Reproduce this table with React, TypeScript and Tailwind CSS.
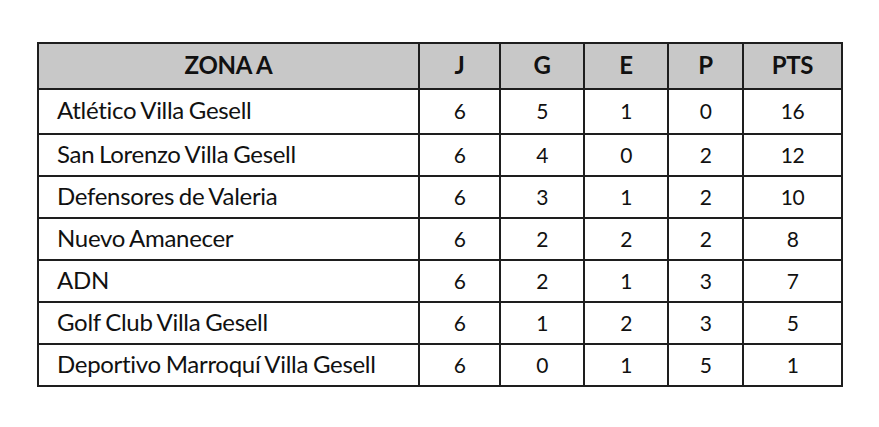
const rows: [string, number, number, number, number, number][] = [
  ["Atlético Villa Gesell", 6, 5, 1, 0, 16],
  ["San Lorenzo Villa Gesell", 6, 4, 0, 2, 12],
  ["Defensores de Valeria", 6, 3, 1, 2, 10],
  ["Nuevo Amanecer", 6, 2, 2, 2, 8],
  ["ADN", 6, 2, 1, 3, 7],
  ["Golf Club Villa Gesell", 6, 1, 2, 3, 5],
  ["Deportivo Marroquí Villa Gesell", 6, 0, 1, 5, 1],
];

const heads = ["J", "G", "E", "P", "PTS"];

export default function App() {
  return (
    <div className="w-[879px] h-[427px] bg-white pl-[37px] pt-[42px] font-['Lato',sans-serif] text-[#111] [font-variant-ligatures:none]">
      <table className="table-fixed border-collapse w-[804px]">
        <colgroup>
          <col className="w-[381px]" />
          <col className="w-[81px]" />
          <col className="w-[84px]" />
          <col className="w-[84px]" />
          <col className="w-[75px]" />
          <col className="w-[99px]" />
        </colgroup>
        <thead>
          <tr className="h-[46px] bg-[#c8c8c8]">
            <th className="border-2 border-[#1e1e1e] text-[24px] font-bold text-center leading-none pb-[2px] tracking-[-0.3px]">
              ZONA A
            </th>
            {heads.map((h) => (
              <th
                key={h}
                className="border-2 border-[#1e1e1e] text-[24px] font-bold text-center leading-none pb-[2px] tracking-[-0.3px]"
              >
                {h}
              </th>
            ))}
          </tr>
        </thead>
        <tbody>
          {rows.map((r, i) => (
            <tr key={r[0]} className={i === 0 ? "h-[45px]" : "h-[42px]"}>
              <td className="border-2 border-[#1e1e1e] text-[24px] leading-none text-left pl-[18px] pb-[3px] tracking-[-0.3px] [word-spacing:-1px]">
                {r[0]}
              </td>
              {r.slice(1).map((v, j) => (
                <td key={j} className="border-2 border-[#1e1e1e] text-[21px] leading-none text-center pb-[2px] tracking-[-0.5px]">
                  {v}
                </td>
              ))}
            </tr>
          ))}
        </tbody>
      </table>
    </div>
  );
}
